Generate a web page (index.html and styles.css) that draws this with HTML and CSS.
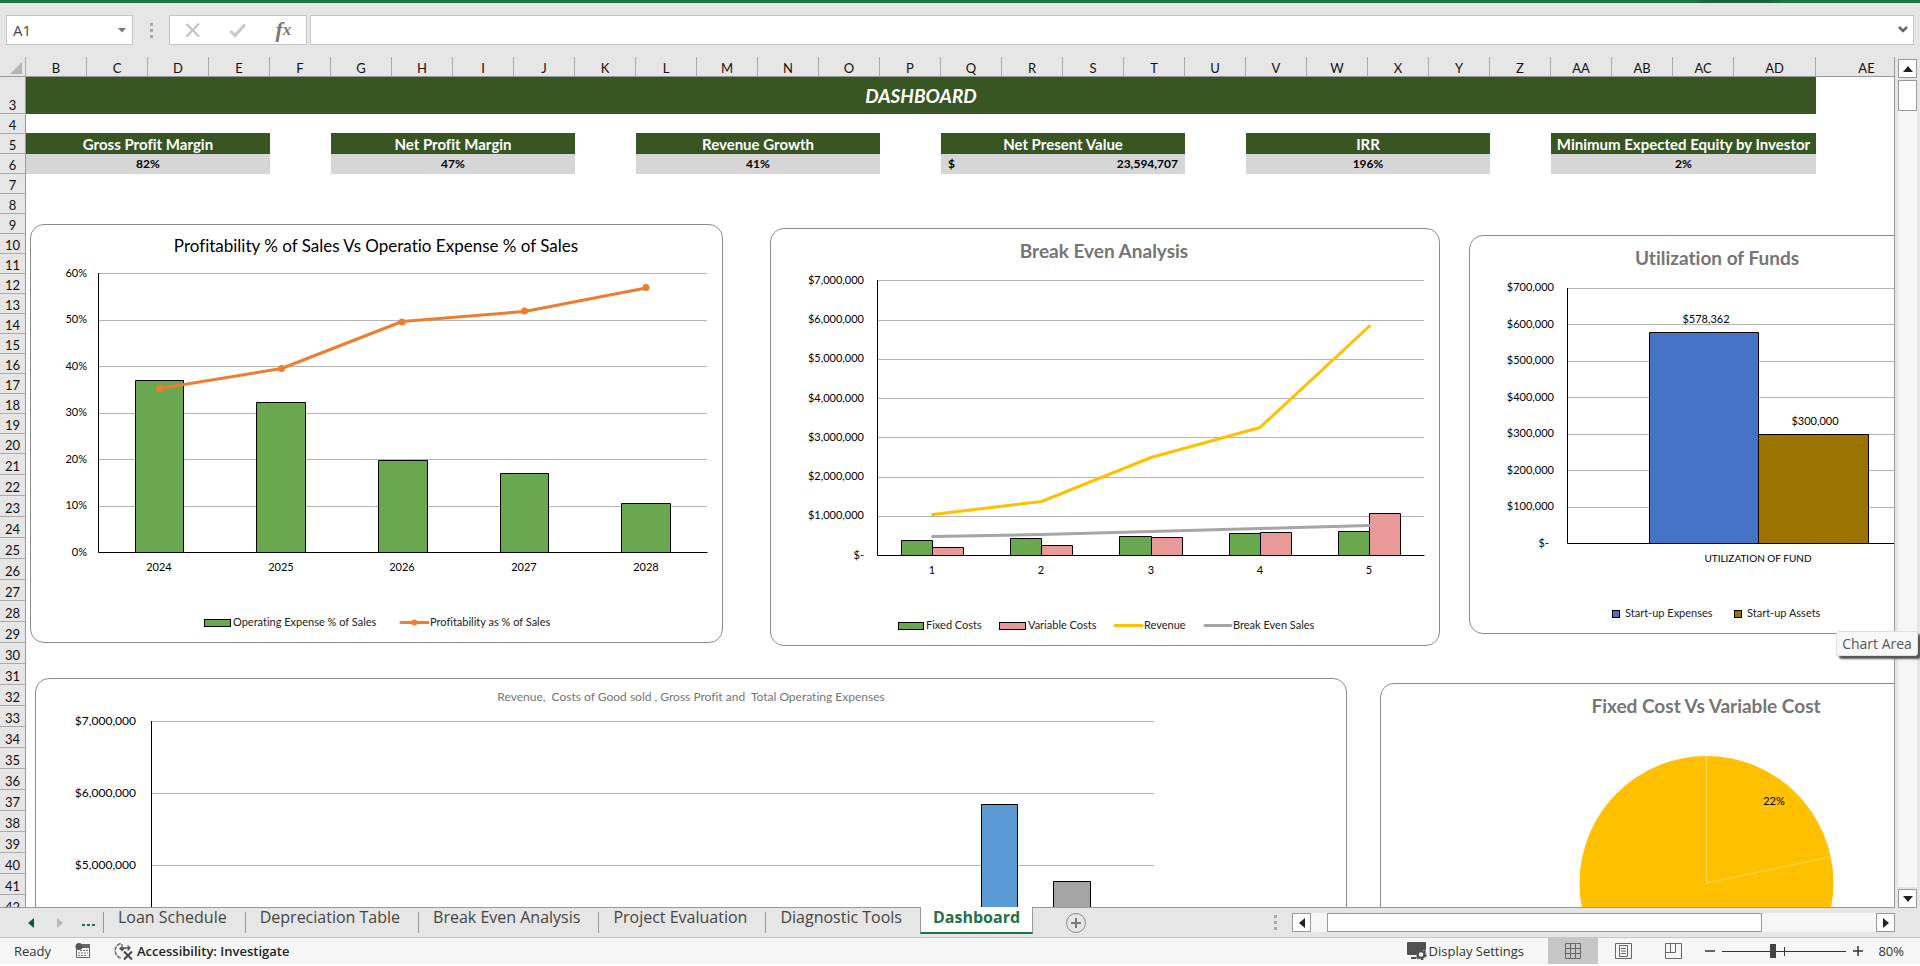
FILE: index.html
```html
<!DOCTYPE html>
<html lang="en">
<head>
<meta charset="utf-8">
<title>Dashboard</title>
<link rel="stylesheet" href="styles.css">
</head>
<body>
<div class="ribbon-edge"></div>

<div class="formula-bar">
  <div class="name-box">
    <input type="text" value="A1" aria-label="Name box">
    <button type="button" aria-label="Name list"><svg width="8" height="5"><path d="M0 0h8L4 4.500z" fill="#777"/></svg></button>
  </div>
  <span class="grip"><i></i><i></i><i></i></span>
  <div class="fx-buttons">
    <button type="button" aria-label="Cancel"><svg width="18" height="18" viewBox="0 0 18 18"><path d="M2.500 3L15 15.500M15 2.500L2.500 15.500" stroke="#c3c3c3" stroke-width="2.200" fill="none"/></svg></button>
    <button type="button" aria-label="Enter"><svg width="18" height="18" viewBox="0 0 18 18"><path d="M1.500 10L6 14.500L16 3.500" stroke="#c8c8c8" stroke-width="3" fill="none"/></svg></button>
    <button type="button" class="fx" aria-label="Insert function">f<span>x</span></button>
  </div>
  <div class="formula-input">
    <input type="text" aria-label="Formula">
    <button type="button" aria-label="Expand formula bar"><svg width="10" height="8"><path d="M1 1l4 4 4-4" stroke="#666" stroke-width="2.500" fill="none"/></svg></button>
  </div>
</div>

<main class="workspace">
  <div class="sheet">
    <table class="cells">
      <colgroup><col class="c-head"><col span="28" class="c-std"><col class="c-ad"><col class="c-ae"></colgroup>
      <thead>
        <tr><th class="corner"><svg width="12" height="12"><path d="M12 0v12H0z" fill="#b4b4b4"/></svg></th><th>B</th><th>C</th><th>D</th><th>E</th><th>F</th><th>G</th><th>H</th><th>I</th><th>J</th><th>K</th><th>L</th><th>M</th><th>N</th><th>O</th><th>P</th><th>Q</th><th>R</th><th>S</th><th>T</th><th>U</th><th>V</th><th>W</th><th>X</th><th>Y</th><th>Z</th><th>AA</th><th>AB</th><th>AC</th><th>AD</th><th>AE</th></tr>
      </thead>
      <tbody>
        <tr class="title-row"><th>3</th><td colspan="29" class="title">DASHBOARD</td><td></td></tr>
        <tr><th>4</th><td colspan="30"></td></tr>
        <tr><th>5</th><td colspan="4" class="kpi">Gross Profit Margin</td><td></td><td colspan="4" class="kpi">Net Profit Margin</td><td></td><td colspan="4" class="kpi">Revenue Growth</td><td></td><td colspan="4" class="kpi">Net Present Value</td><td></td><td colspan="4" class="kpi">IRR</td><td></td><td colspan="4" class="kpi">Minimum Expected Equity by Investor</td><td></td></tr>
        <tr><th>6</th><td colspan="4" class="val">82%</td><td></td><td colspan="4" class="val">47%</td><td></td><td colspan="4" class="val">41%</td><td></td><td colspan="4" class="val"><span class="money"><span>$</span><span>23,594,707</span></span></td><td></td><td colspan="4" class="val">196%</td><td></td><td colspan="4" class="val">2%</td><td></td></tr>
        <tr><th>7</th><td colspan="30"></td></tr>
        <tr><th>8</th><td colspan="30"></td></tr>
        <tr><th>9</th><td colspan="30"></td></tr>
        <tr><th>10</th><td colspan="30"></td></tr>
        <tr><th>11</th><td colspan="30"></td></tr>
        <tr><th>12</th><td colspan="30"></td></tr>
        <tr><th>13</th><td colspan="30"></td></tr>
        <tr><th>14</th><td colspan="30"></td></tr>
        <tr><th>15</th><td colspan="30"></td></tr>
        <tr><th>16</th><td colspan="30"></td></tr>
        <tr><th>17</th><td colspan="30"></td></tr>
        <tr><th>18</th><td colspan="30"></td></tr>
        <tr><th>19</th><td colspan="30"></td></tr>
        <tr><th>20</th><td colspan="30"></td></tr>
      </tbody>
      <tbody class="tall">
        <tr><th>21</th><td colspan="30"></td></tr>
        <tr><th>22</th><td colspan="30"></td></tr>
        <tr><th>23</th><td colspan="30"></td></tr>
        <tr><th>24</th><td colspan="30"></td></tr>
        <tr><th>25</th><td colspan="30"></td></tr>
        <tr><th>26</th><td colspan="30"></td></tr>
        <tr><th>27</th><td colspan="30"></td></tr>
        <tr><th>28</th><td colspan="30"></td></tr>
        <tr><th>29</th><td colspan="30"></td></tr>
        <tr><th>30</th><td colspan="30"></td></tr>
        <tr><th>31</th><td colspan="30"></td></tr>
        <tr><th>32</th><td colspan="30"></td></tr>
        <tr><th>33</th><td colspan="30"></td></tr>
        <tr><th>34</th><td colspan="30"></td></tr>
        <tr><th>35</th><td colspan="30"></td></tr>
        <tr><th>36</th><td colspan="30"></td></tr>
        <tr><th>37</th><td colspan="30"></td></tr>
        <tr><th>38</th><td colspan="30"></td></tr>
        <tr><th>39</th><td colspan="30"></td></tr>
        <tr><th>40</th><td colspan="30"></td></tr>
        <tr><th>41</th><td colspan="30"></td></tr>
        <tr><th>42</th><td colspan="30"></td></tr>
      </tbody>
    </table>

    <!-- Profitability vs operating expense -->
    <section class="chart chart-profit">
      <svg viewBox="30 224 693 419" width="693" height="419">
        <path class="grid" d="M99 273.500H707M99 320.500H707M99 366.500H707M99 413.500H707M99 459.500H707M99 506.500H707"/>
        <g class="bar green"><path d="M135.500 552.500V380.500H183.500V552.500"/><path d="M256.500 552.500V402.500H305.500V552.500"/><path d="M378.500 552.500V460.500H427.500V552.500"/><path d="M500.500 552.500V473.500H548.500V552.500"/><path d="M621.500 552.500V503.500H670.500V552.500"/></g>
        <path class="axis" d="M98.500 273V552.500H707.500"/>
        <path class="line orange" d="M159.500 388.500L281.500 368.500L402 321.500L524.500 311.500L646 288"/>
        <g fill="#ed7d31"><circle cx="159.500" cy="388.500" r="3.500"/><circle cx="281.500" cy="368.500" r="3.500"/><circle cx="402" cy="322" r="3.500"/><circle cx="524.500" cy="311" r="3.500"/><circle cx="646" cy="287.500" r="3.500"/></g>
        <text class="h-dark" x="376" y="252">Profitability % of Sales Vs Operatio Expense % of Sales</text>
        <g class="ylab"><text x="87" y="277">60%</text><text x="87" y="323">50%</text><text x="87" y="370">40%</text><text x="87" y="416">30%</text><text x="87" y="463">20%</text><text x="87" y="509">10%</text><text x="87" y="556">0%</text></g>
        <g class="xlab"><text x="159" y="571">2024</text><text x="281" y="571">2025</text><text x="402" y="571">2026</text><text x="524" y="571">2027</text><text x="646" y="571">2028</text></g>
        <rect class="bar green" x="204.500" y="619.500" width="26" height="7"/>
        <text class="leg" x="233" y="626">Operating Expense % of Sales</text>
        <path class="line orange" d="M401 622.500H428"/><circle cx="414.500" cy="622.500" r="3" fill="#ed7d31"/>
        <text class="leg" x="430" y="626">Profitability as % of Sales</text>
      </svg>
    </section>

    <!-- Break even analysis -->
    <section class="chart chart-break">
      <svg viewBox="770 228 670 418" width="670" height="418">
        <path class="grid" d="M878 280.500H1424M878 320.500H1424M878 359.500H1424M878 398.500H1424M878 437.500H1424M878 477.500H1424M878 516.500H1424"/>
        <g class="bar green"><path d="M901.500 555.500V540.500H932.500V555.500"/><path d="M1010.500 555.500V538.500H1041.500V555.500"/><path d="M1119.500 555.500V536.500H1151.500V555.500"/><path d="M1229.500 555.500V533.500H1260.500V555.500"/><path d="M1338.500 555.500V531.500H1369.500V555.500"/></g>
        <g class="bar pink"><path d="M932.500 555.500V547.500H963.500V555.500"/><path d="M1041.500 555.500V545.500H1072.500V555.500"/><path d="M1151.500 555.500V537.500H1182.500V555.500"/><path d="M1260.500 555.500V532.500H1291.500V555.500"/><path d="M1369.500 555.500V513.500H1400.500V555.500"/></g>
        <path class="axis" d="M877.500 280V555.500H1424.500"/>
        <path class="line yellow" d="M932.500 514.500L1041.500 501.500L1151 457.500L1260 427.500L1369.500 326"/>
        <path class="line gray" d="M932.500 536.500L1041.500 534.500L1151 531.500L1260 528.500L1369.500 525.500"/>
        <text class="h-gray" x="1104" y="258">Break Even Analysis</text>
        <g class="ylab"><text x="864" y="284">$7,000,000</text><text x="864" y="323">$6,000,000</text><text x="864" y="362">$5,000,000</text><text x="864" y="402">$4,000,000</text><text x="864" y="441">$3,000,000</text><text x="864" y="480">$2,000,000</text><text x="864" y="519">$1,000,000</text><text x="864" y="559">$-</text></g>
        <g class="xlab"><text x="932" y="574">1</text><text x="1041" y="574">2</text><text x="1151" y="574">3</text><text x="1260" y="574">4</text><text x="1369" y="574">5</text></g>
        <rect class="bar green" x="898.500" y="622.500" width="25" height="7"/><text class="leg" x="926" y="629">Fixed Costs</text>
        <rect class="bar pink" x="999.500" y="622.500" width="26" height="7"/><text class="leg" x="1028" y="629">Variable Costs</text>
        <path class="line yellow" d="M1115 625.500H1142"/><text class="leg" x="1144" y="629">Revenue</text>
        <path class="line gray" d="M1205 625.500H1231"/><text class="leg" x="1233" y="629">Break Even Sales</text>
      </svg>
    </section>

    <!-- Utilization of funds -->
    <section class="chart chart-funds">
      <svg viewBox="1469 235 500 399" width="500" height="399">
        <path class="grid" d="M1568 288.500H1950M1568 324.500H1950M1568 361.500H1950M1568 397.500H1950M1568 434.500H1950M1568 470.500H1950M1568 507.500H1950"/>
        <path class="bar blue" d="M1649.500 543.500V332.500H1758.500V543.500"/>
        <path class="bar brown" d="M1758.500 543.500V434.500H1868.500V543.500"/>
        <path class="axis" d="M1567.500 288V543.500H1950"/>
        <text class="h-gray" x="1717" y="265">Utilization of Funds</text>
        <g class="ylab"><text x="1554" y="291">$700,000</text><text x="1554" y="328">$600,000</text><text x="1554" y="364">$500,000</text><text x="1554" y="401">$400,000</text><text x="1554" y="437">$300,000</text><text x="1554" y="474">$200,000</text><text x="1554" y="510">$100,000</text><text x="1549" y="547">$-</text></g>
        <g class="xlab"><text x="1706" y="323">$578,362</text><text x="1815" y="425">$300,000</text><text class="small" x="1758" y="562">UTILIZATION OF FUND</text></g>
        <rect class="bar blue" x="1612.500" y="610.500" width="7" height="7"/><text class="leg" x="1625" y="617">Start-up Expenses</text>
        <rect class="bar brown" x="1734.500" y="610.500" width="7" height="7"/><text class="leg" x="1747" y="617">Start-up Assets</text>
      </svg>
    </section>

    <!-- Revenue, COGS, gross profit, operating expenses -->
    <section class="chart chart-revenue">
      <svg viewBox="35 678 1312 400" width="1312" height="400">
        <path class="grid" d="M152 721.500H1154M152 793.500H1154M152 865.500H1154M152 937.500H1154"/>
        <path class="bar sky" d="M981.500 1070V804.500H1017.500V1070"/>
        <path class="bar silver" d="M1053.500 1070V881.500H1090.500V1070"/>
        <path class="axis" d="M151.500 721V1070"/>
        <text class="h-small" x="691" y="701">Revenue,&#160; Costs of Good sold , Gross Profit and&#160; Total Operating Expenses</text>
        <g class="ylab big"><text x="136" y="725">$7,000,000</text><text x="136" y="797">$6,000,000</text><text x="136" y="869">$5,000,000</text></g>
      </svg>
    </section>

    <!-- Fixed vs variable cost -->
    <section class="chart chart-pie">
      <svg viewBox="1380 683 600 400" width="600" height="400">
        <circle cx="1706.500" cy="883" r="127" fill="#ffc000"/>
        <path d="M1706.500 756V883L1830 857" fill="none" stroke="#ffd95c"/>
        <text class="h-gray" x="1706" y="713">Fixed Cost Vs Variable Cost</text>
        <text class="xlab-one" x="1774" y="805">22%</text>
      </svg>
    </section>
  </div>

  <div class="vscroll">
    <button type="button" aria-label="Scroll up"><svg width="10" height="6"><path d="M0 6L5 0l5 6z" fill="#222"/></svg></button>
    <div class="track"><div class="thumb"></div></div>
    <button type="button" aria-label="Scroll down"><svg width="10" height="6"><path d="M0 0h10L5 6z" fill="#222"/></svg></button>
  </div>
  <div class="tooltip">Chart Area</div>
</main>

<nav class="tabs">
  <div class="tab-nav">
    <button type="button" aria-label="Previous sheets"><svg width="6" height="10"><path d="M6 0v10L0 5z" fill="#0b5c33"/></svg></button>
    <button type="button" aria-label="Next sheets"><svg width="6" height="10"><path d="M0 0v10l6-5z" fill="#b8b8b8"/></svg></button>
    <button type="button" class="more" aria-label="More sheets"><svg width="13" height="2"><path d="M0 0h3v2H0zM5 0h3v2H5zM10 0h3v2h-3z" fill="#1f7246"/></svg></button>
  </div>
  <div class="tab-list">
    <button type="button">Loan Schedule</button>
    <button type="button">Depreciation Table</button>
    <button type="button">Break Even Analysis</button>
    <button type="button">Project Evaluation</button>
    <button type="button">Diagnostic Tools</button>
    <button type="button" class="active">Dashboard</button>
  </div>
  <button type="button" class="add" aria-label="New sheet"><svg width="22" height="22"><circle cx="11" cy="11" r="9.500" fill="none" stroke="#888"/><path d="M6 11h10M11 6v10" stroke="#777" stroke-width="2"/></svg></button>
  <span class="grip"><i></i><i></i><i></i></span>
  <div class="hscroll">
    <button type="button" aria-label="Scroll left"><svg width="6" height="10"><path d="M6 0v10L0 5z" fill="#222"/></svg></button>
    <div class="track"><div class="thumb"></div></div>
    <button type="button" aria-label="Scroll right"><svg width="6" height="10"><path d="M0 0v10l6-5z" fill="#222"/></svg></button>
  </div>
</nav>

<footer class="status">
  <span class="ready">Ready</span>
  <button type="button" class="macro" aria-label="Record macro"><svg width="16" height="16" viewBox="0 0 16 16"><path d="M1.500 5v9.500h13V2.500H6" fill="none" stroke="#666"/><path d="M7 1h8v4H7z" fill="#666"/><circle cx="4" cy="3.500" r="3.500" fill="#555"/><path d="M5 7.500h2M8 7.500h2M11 7.500h2M3 10h2M6 10h2M9 10h2M12 10h1M3 12.500h2M6 12.500h2M9 12.500h2" stroke="#777"/></svg></button>
  <button type="button" class="access"><svg width="20" height="18" viewBox="0 0 20 18"><path d="M6.500 1.500A7.500 7.500 0 0 0 7 16" fill="none" stroke="#666" stroke-width="1.500" stroke-dasharray="4 1"/><path d="M6 6h10M13.500 3.500L16 6L13.500 8.500M8 2v6M5.500 6L8 8.500L10.500 6" fill="none" stroke="#555" stroke-width="1.300"/><path d="M10 9.500l8 8M18 9.500l-8 8" stroke="#444" stroke-width="2"/></svg>Accessibility: Investigate</button>
  <span class="spacer"></span>
  <button type="button" class="display"><svg width="20" height="18" viewBox="0 0 20 18"><path d="M1 0h17q1 0 1 1v7h-6l-4 5H1q-1 0-1-1V1q0-1 1-1zM4 15h5v2H4z" fill="#505050"/><circle cx="14" cy="12.500" r="3.500" fill="none" stroke="#505050" stroke-width="2.500"/><circle cx="14" cy="12.500" r="5" fill="none" stroke="#505050" stroke-width="1.500" stroke-dasharray="2.500 2.700"/></svg>Display Settings</button>
  <div class="views">
    <button type="button" class="on" aria-label="Normal view"><svg width="17" height="17"><path d="M.5.5h15v15H.5zM5.500.5v15M10.500.5v15M.5 5.500h15M.5 10.500h15" fill="none" stroke="#666"/></svg></button>
    <button type="button" aria-label="Page layout view"><svg width="17" height="17"><path d="M.5.5h16v15H.5zM4.500 2.500h8v11h-8zM6 5.500h5M6 8h5M6 10.500h5" fill="none" stroke="#666"/></svg></button>
    <button type="button" aria-label="Page break view"><svg width="17" height="17"><path d="M.5.5h16v15H.5zM.5 9.500h10v-9M5.500.5v9" fill="none" stroke="#666"/></svg></button>
  </div>
  <div class="zoom">
    <button type="button" aria-label="Zoom out"><svg width="10" height="10"><path d="M0 5h10" stroke="#333" stroke-width="1.500"/></svg></button>
    <input type="range" min="0" max="100" value="41" aria-label="Zoom">
    <button type="button" aria-label="Zoom in"><svg width="10" height="10"><path d="M0 5h10M5 0v10" stroke="#333" stroke-width="1.500"/></svg></button>
    <span class="pct">80%</span>
  </div>
</footer>
</body>
</html>
```

FILE: styles.css
```css
* { box-sizing: border-box; }
body {
  margin: 0;
  height: 100vh;
  padding-bottom: 2px;
  display: flex;
  flex-direction: column;
  overflow: hidden;
  background: #fff;
  color: #222;
  font-family: "Open Sans", "Noto Sans", sans-serif;
}
button { border: 0; padding: 0; margin: 0; background: none; font: inherit; color: inherit; display: flex; align-items: center; justify-content: center; }
input { border: 0; padding: 0; margin: 0; background: none; font: inherit; color: inherit; min-width: 0; outline: 0; }
svg { display: block; flex: none; }

.ribbon-edge { height: 3px; flex: none; background: linear-gradient(to right, transparent 88%, #1e6340 89%, #1e6340 92%, transparent 93%) #217346; }

/* Formula bar */
.formula-bar { flex: none; height: 54px; padding: 12px 6px; display: flex; background: #e6e6e6; }
.name-box, .fx-buttons, .formula-input { display: flex; align-items: center; background: #fff; border: 1px solid #c6c6c6; }
.name-box { width: 127px; padding: 0 6px; font-size: 15px; color: #444; }
.name-box input { flex: 1; }
.grip { display: flex; flex-direction: column; justify-content: center; gap: 3px; }
.grip i { width: 3px; height: 3px; background: #a8a8a8; }
.formula-bar .grip { margin: 0 16px 0 17px; }
.fx-buttons { width: 138px; margin-right: 3px; justify-content: space-around; }
.fx-buttons button { width: 44px; height: 28px; }
.fx-buttons .fx { font: italic 700 22px "Liberation Serif", serif; color: #777; }
.fx-buttons .fx span { font-size: 17px; }
.formula-input { flex: 1; padding-right: 5px; }
.formula-input input { flex: 1; }

/* Worksheet */
.workspace { flex: 1; min-height: 0; display: flex; position: relative; background: #e6e6e6; }
.sheet { flex: 1; min-width: 0; position: relative; overflow: hidden; border-right: 1px solid #999; border-bottom: 1px solid #999; background: linear-gradient(#e6e6e6 20px, #fff 20px); }
.cells { table-layout: fixed; width: 1918px; border-collapse: separate; border-spacing: 0; font-family: Lato, "Open Sans", sans-serif; font-size: 13px; line-height: 16px; font-variant-ligatures: none; }
.c-head { width: 26px; }
.c-std { width: 61px; }
.c-ad { width: 82px; }
.c-ae { width: 102px; }
.cells th, .cells td { padding: 0; }
.cells th { font-weight: 400; background: #e6e6e6; color: #111; }
.cells thead th { height: 20px; padding-top: 3px; border-bottom: 1px solid #999; border-right: 1px solid #aaa; }
.cells thead th:last-child { border-right-color: transparent; }
.cells .corner { padding: 0 0 2px 10px; vertical-align: bottom; }
.cells tbody tr { height: 20px; }
.cells .tall tr { height: 21px; }
.cells tbody .title-row, .title-row th { height: 37px; }
.cells tbody th { border-right: 1px solid #999; border-bottom: 1px solid #aaa; vertical-align: bottom; }
.title { background: #375623; color: #fff; text-align: center; font-size: 19px; font-weight: 700; font-style: italic; }
.kpi { background: #375623; color: #fff; text-align: center; font-size: 15px; font-weight: 700; white-space: nowrap; box-shadow: 0 -1px #375623; }
.val { background: #d6d6d6; color: #000; text-align: center; font-size: 12px; font-weight: 700; }
.money { display: flex; justify-content: space-between; padding: 0 7px; }

/* Charts float above the cells */
.chart { position: absolute; overflow: hidden; background: #fff; border: 1px solid #8c8c8c; border-radius: 14px; }
.chart svg { margin: -1px; font-family: Lato, "Open Sans", sans-serif; font-size: 11px; font-variant-ligatures: none; }
.chart-profit { left: 30px; top: 167px; width: 693px; height: 419px; }
.chart-break { left: 770px; top: 171px; width: 670px; height: 418px; }
.chart-funds { left: 1469px; top: 178px; width: 500px; height: 399px; }
.chart-revenue { left: 35px; top: 621px; width: 1312px; height: 400px; }
.chart-pie { left: 1380px; top: 626px; width: 600px; height: 400px; }
.grid { fill: none; stroke: #b3b3b3; }
.axis { fill: none; stroke: #000; }
.bar { stroke: #000; }
.green { fill: #6aa84f; }
.pink { fill: #ea9999; }
.blue { fill: #4472c4; }
.brown { fill: #9c7300; }
.sky { fill: #5b9bd5; }
.silver { fill: #a5a5a5; }
.line { fill: none; stroke-width: 3px; stroke-linejoin: round; stroke-linecap: round; }
.orange { stroke: #ed7d31; }
.yellow { stroke: #ffc000; }
.gray { stroke: #a5a5a5; }
.ylab { text-anchor: end; }
.xlab, .xlab-one { text-anchor: middle; }
.small { font-size: 10px; }
.big { font-size: 12px; }
.leg { fill: #222; }
.h-dark { font-size: 17px; text-anchor: middle; fill: #000; }
.h-gray { font-size: 19px; font-weight: 700; text-anchor: middle; fill: #757575; }
.h-small { font-size: 12px; text-anchor: middle; fill: #757575; }
.tooltip { position: absolute; right: 2px; top: 574px; width: 82px; height: 25px; line-height: 23px; text-align: center; font-size: 14px; color: #575757; background: #f8f8f8; border: 1px solid #e0e0e0; border-radius: 3px; box-shadow: 3px 3px 2px #555; }

/* Scroll bars */
.vscroll { flex: none; width: 25px; padding: 2px 3px 0 3px; display: flex; flex-direction: column; gap: 2px; }
.vscroll button, .hscroll button, .thumb { background: #fff; border: 1px solid #999; }
.vscroll button { height: 19px; flex: none; }
.vscroll .track { flex: 1; background: #f6f6f6; }
.vscroll .thumb { height: 31px; }
.hscroll { flex: none; width: 603px; height: 19px; display: flex; margin-top: 5px; }
.hscroll button { width: 19px; }
.hscroll .track { flex: 1; background: #f6f6f6; padding: 0 114px 0 16px; }
.hscroll .thumb { height: 19px; }

/* Sheet tabs */
.tabs { flex: none; height: 29px; display: flex; padding-right: 25px; background: #e6e6e6; font-size: 16px; color: #444; }
.tab-nav { flex: none; width: 103px; display: flex; align-items: center; padding-left: 28px; gap: 23px; }
.tab-nav .more { margin-left: -4px; padding-top: 4px; }
.tab-list { display: flex; height: 26px; }
.tab-list button { position: relative; padding: 0 18px 0 15px; height: 26px; line-height: 18px; align-items: flex-start; white-space: nowrap; }
.tab-list button::before { content: ""; position: absolute; left: 0; top: 4px; height: 21px; border-left: 1px solid #999; }
.tab-list .active { padding: 0 12px; margin-top: -1px; height: 27px; background: #fff; border-right: 1px solid #999; border-left: 1px solid #999; border-bottom: 2px solid #217346; color: #217346; font-weight: 700; line-height: 20px; }
.tab-list .active::before { content: none; }
.add { width: 22px; margin: 0 0 0 32px; }
.tabs .grip { margin: 0 15px 0 auto; }

/* Status bar */
.status { flex: none; height: 27px; display: flex; align-items: center; padding: 0 16px 0 14px; background: #f6f6f6; border-top: 1px solid #c6c6c6; font-size: 13px; color: #333; }
.ready { width: 61px; }
.macro { width: 16px; margin-right: 23px; }
.access { gap: 3px; font-weight: 600; color: #222; }
.spacer { flex: 1; }
.display { gap: 2px; margin-right: 24px; }
.views { display: flex; height: 26px; }
.views button { width: 50px; }
.views .on { background: #c6c6c6; }
.zoom { display: flex; align-items: center; gap: 7px; margin-left: 7px; }
.zoom input { appearance: none; width: 124px; height: 14px; background: linear-gradient(#333, #333) 62px 3px / 1px 9px no-repeat, linear-gradient(#333, #333) 0 7px / 100% 1px no-repeat; }
.zoom input::-webkit-slider-thumb { appearance: none; width: 6px; height: 14px; background: #444; }
.pct { width: 30px; margin-left: 4px; text-align: right; }
```
